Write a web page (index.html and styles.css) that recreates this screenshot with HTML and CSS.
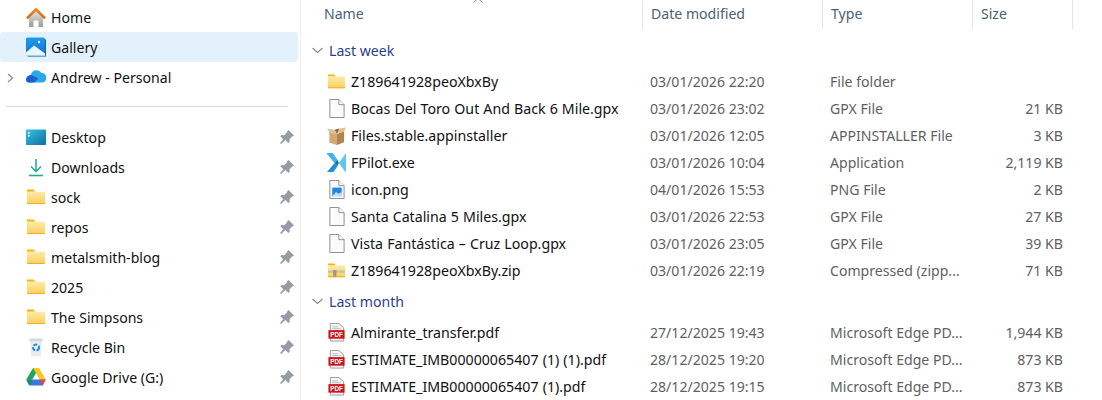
FILE: index.html
```html
<!DOCTYPE html>
<html lang="en">
<head>
    <meta charset="UTF-8">
    <meta name="viewport" content="width=device-width, initial-scale=1.0">
    <title>Explorer</title>
    <link rel="stylesheet" href="styles.css">
</head>
<body>
    <!-- shared icons -->
    <svg class="defs" width="0" height="0">
        <defs>
            <linearGradient id="folderFill" x1="0" y1="0" x2="0" y2="1">
                <stop offset="0" stop-color="#ffeaa6"/>
                <stop offset="1" stop-color="#fbcf5e"/>
            </linearGradient>
            <linearGradient id="desktopFill" x1="0" y1="0" x2="1" y2="1">
                <stop offset="0" stop-color="#35c3e8"/>
                <stop offset="1" stop-color="#0f6f9c"/>
            </linearGradient>
            <linearGradient id="roofFill" x1="0" y1="0" x2="0" y2="1">
                <stop offset="0" stop-color="#f08a24"/>
                <stop offset="1" stop-color="#d9660f"/>
            </linearGradient>
            <linearGradient id="wallFill" x1="0" y1="0" x2="0" y2="1">
                <stop offset="0" stop-color="#e8e8e8"/>
                <stop offset="1" stop-color="#9c9c9c"/>
            </linearGradient>
            <linearGradient id="galleryFill" x1="0" y1="0" x2="0" y2="1">
                <stop offset="0" stop-color="#1c9cf0"/>
                <stop offset="1" stop-color="#1670cc"/>
            </linearGradient>
            <symbol id="folder" viewBox="0 0 20 20">
                <path d="M1 2.500h6.500l2 2.200H1z" fill="#f5b50f"/>
                <path d="M1 4.700h18V16a1 1 0 0 1-1 1H2a1 1 0 0 1-1-1z" fill="url(#folderFill)"/>
                <path d="M1 16h18v.2a.9.9 0 0 1-.9.9H1.900a.9.9 0 0 1-.9-.9z" fill="#eeb023"/>
            </symbol>
            <symbol id="zipfolder" viewBox="0 0 20 20">
                <path d="M1 2.500h6.500l2 2.200H1z" fill="#f5b50f"/>
                <path d="M1 4.700h18V16a1 1 0 0 1-1 1H2a1 1 0 0 1-1-1z" fill="url(#folderFill)"/>
                <rect x="1" y="10" width="18" height="2.400" fill="#c9c2a4"/>
                <rect x="6.500" y="9.500" width="3.400" height="7.500" fill="#9c988a"/>
                <path d="M1 16h18v.2a.9.9 0 0 1-.9.9H1.900a.9.9 0 0 1-.9-.9z" fill="#eeb023"/>
            </symbol>
            <symbol id="page" viewBox="0 0 20 20">
                <path d="M3 .5h9.500L18 6v13.500H3z" fill="#fbfbfb" stroke="#8a8a8a"/>
                <path d="M12.500.5V6H18" fill="#fff" stroke="#8a8a8a"/>
            </symbol>
            <symbol id="image" viewBox="0 0 20 20">
                <path d="M3 .5h9.500L18 6v13.500H3z" fill="#fbfbfb" stroke="#8a8a8a"/>
                <path d="M12.500.5V6H18" fill="#fff" stroke="#8a8a8a"/>
                <rect x="5.500" y="8" width="10" height="9" fill="#1f86e0"/>
                <path d="M5.500 17l4-4.500 2.500 2 3.500-2V17z" fill="#bfe3fb"/>
            </symbol>
            <symbol id="pdf" viewBox="0 0 20 20">
                <path d="M3.500.5h9L17.500 5v14h-14z" fill="#f6f6f6" stroke="#9a9a9a"/>
                <path d="M5.500 4h6M5.500 6h9" stroke="#bbb" fill="none"/>
                <rect x="1.500" y="7.500" width="17" height="9" fill="#c9151b"/>
                <text x="10" y="14.600" class="pdf-text">PDF</text>
            </symbol>
            <symbol id="pin" viewBox="0 0 14 14">
                <path d="M8.600 0l5.400 5.400-.9.9-1 .1-2.600 2.900.2 2.500-1.300 1.300-3-3L1 14l-1-1 3.300-3.700-3-3L1.600 5l2.500.2L7 2.600l.1-1.200z" fill="#949da5"/>
            </symbol>
        </defs>
    </svg>

    <div class="window">
        <nav class="sidebar">
            <a class="nav-item">
                <svg class="nav-icon" viewBox="0 0 20 20">
                    <path d="M3 9.500L10 3l7 6.500V20h-4.500v-6.500h-5V20H3z" fill="url(#wallFill)"/>
                    <path d="M0 10.500L10 .5l10 10-1.800 1.800L10 4.200 1.800 12.300z" fill="url(#roofFill)"/>
                </svg>
                <span class="nav-label">Home</span>
            </a>
            <a class="nav-item active">
                <svg class="nav-icon" viewBox="0 0 20 20">
                    <rect x="0" y="0.500" width="19" height="18.500" rx="1.500" fill="url(#galleryFill)"/>
                    <path d="M19 2v17h1V3.500A1.500 1.500 0 0 0 19 2z" fill="#0e62ad"/>
                    <path d="M0 15.500l8-7 11 8V19H1.500A1.500 1.500 0 0 1 0 17.500z" fill="#eaf6fe"/>
                    <circle cx="13" cy="5" r="1.200" fill="#fff"/>
                    <path d="M1 18.500h19V20H2z" fill="#63a8dc"/>
                </svg>
                <span class="nav-label">Gallery</span>
            </a>
            <a class="nav-item">
                <span class="expander">
                    <svg width="7" height="10" viewBox="0 0 7 10"><path d="M1 1l4.500 4L1 9" fill="none" stroke="#8a8a8a" stroke-width="1.200"/></svg>
                </span>
                <svg class="nav-icon" viewBox="0 0 20 20">
                    <path d="M5 7.500a5.800 5.800 0 0 1 10.500-1.500 4.500 4.500 0 0 1 .5 9.500H3.500a3.200 3.200 0 0 1-.5-6.500z" fill="#29a8ea"/>
                    <path d="M0 12.500c.5-2.500 2.500-4.500 5.500-4.500l7 3.500-4.500 4H3a3 3 0 0 1-3-3z" fill="#1c5fd0"/>
                </svg>
                <span class="nav-label">Andrew - Personal</span>
            </a>
            <div class="nav-divider"></div>
            <a class="nav-item">
                <svg class="nav-icon" viewBox="0 0 20 20">
                    <rect x="0" y="2.500" width="20" height="15.500" rx=".8" fill="url(#desktopFill)"/>
                    <rect x="2" y="5" width="1.600" height="1.600" fill="#fff"/>
                    <rect x="2" y="8" width="1.600" height="1.600" fill="#fff"/>
                </svg>
                <span class="nav-label">Desktop</span>
                <svg class="pin"><use href="#pin"/></svg>
            </a>
            <a class="nav-item">
                <svg class="nav-icon" viewBox="0 0 20 20">
                    <path d="M10 2v12M5 9.500l5 5 5-5" fill="none" stroke="#20ab8f" stroke-width="1.500"/>
                    <path d="M3 18.500h14" stroke="#20ab8f" stroke-width="1.600"/>
                </svg>
                <span class="nav-label">Downloads</span>
                <svg class="pin"><use href="#pin"/></svg>
            </a>
            <a class="nav-item">
                <svg class="nav-icon"><use href="#folder"/></svg>
                <span class="nav-label">sock</span>
                <svg class="pin"><use href="#pin"/></svg>
            </a>
            <a class="nav-item">
                <svg class="nav-icon"><use href="#folder"/></svg>
                <span class="nav-label">repos</span>
                <svg class="pin"><use href="#pin"/></svg>
            </a>
            <a class="nav-item">
                <svg class="nav-icon"><use href="#folder"/></svg>
                <span class="nav-label">metalsmith-blog</span>
                <svg class="pin"><use href="#pin"/></svg>
            </a>
            <a class="nav-item">
                <svg class="nav-icon"><use href="#folder"/></svg>
                <span class="nav-label">2025</span>
                <svg class="pin"><use href="#pin"/></svg>
            </a>
            <a class="nav-item">
                <svg class="nav-icon"><use href="#folder"/></svg>
                <span class="nav-label">The Simpsons</span>
                <svg class="pin"><use href="#pin"/></svg>
            </a>
            <a class="nav-item">
                <svg class="nav-icon" viewBox="0 0 20 20">
                    <path d="M4 4h12l-1.200 14.500a1 1 0 0 1-1 .9H6.200a1 1 0 0 1-1-.9z" fill="#e9edf0"/>
                    <path d="M3.500 1.500h13V4h-13z" fill="#d3d7da"/>
                    <circle cx="10" cy="10.500" r="3" fill="none" stroke="#1f8fdc" stroke-width="2" stroke-dasharray="4 1.500"/>
                </svg>
                <span class="nav-label">Recycle Bin</span>
                <svg class="pin"><use href="#pin"/></svg>
            </a>
            <a class="nav-item">
                <svg class="nav-icon" viewBox="0 0 20 20">
                    <path d="M7 1h6L6.300 12.500H.3z" fill="#1fa463"/>
                    <path d="M7 1h6l6.700 11.500h-6z" fill="#ffc51f"/>
                    <path d="M.3 12.500h19.400l-3 6H3.300z" fill="#3777e3"/>
                    <path d="M6.300 12.500L3.300 18.500.3 12.500z" fill="#1a8a55"/>
                    <path d="M13.700 12.500h6L16.700 18.500l-1-.5z" fill="#e8453c"/>
                </svg>
                <span class="nav-label">Google Drive (G:)</span>
                <svg class="pin"><use href="#pin"/></svg>
            </a>
        </nav>

        <main class="files">
            <svg class="sort-caret" width="10" height="5" viewBox="0 0 10 5"><path d="M.5 4.500L5 .5l4.500 4" fill="none" stroke="#8a8a8a"/></svg>
            <div class="col-header">
                <div class="col col-name">Name</div>
                <div class="col">Date modified</div>
                <div class="col">Type</div>
                <div class="col">Size</div>
            </div>

            <div class="group-title">
                <svg width="11" height="7" viewBox="0 0 11 7"><path d="M.5 1l5 4.500 5-4.500" fill="none" stroke="#8a8a8a" stroke-width="1.100"/></svg>
                <span>Last week</span>
            </div>
            <div class="file-row">
                <div class="file-name"><svg class="file-icon"><use href="#folder"/></svg>Z189641928peoXbxBy</div>
                <div class="file-meta">03/01/2026 22:20</div>
                <div class="file-meta">File folder</div>
                <div class="file-meta file-size"></div>
            </div>
            <div class="file-row">
                <div class="file-name"><svg class="file-icon"><use href="#page"/></svg>Bocas Del Toro Out And Back 6 Mile.gpx</div>
                <div class="file-meta">03/01/2026 23:02</div>
                <div class="file-meta">GPX File</div>
                <div class="file-meta file-size">21 KB</div>
            </div>
            <div class="file-row">
                <div class="file-name">
                    <svg class="file-icon" viewBox="0 0 20 20">
                        <path d="M2.500 6l8 2.500V20l-8-2.500z" fill="#d3aa75"/>
                        <path d="M10.500 8.500l7.500-3V17l-7.500 3z" fill="#b08550"/>
                        <path d="M2.500 6L0 2.500l8 1.500 2.500 4.500zM18 5.500L20 1.500l-7 1-2.500 6z" fill="#e3c090"/>
                        <path d="M8 4l5-1.500-2.500 6z" fill="#8d6638"/>
                    </svg>Files.stable.appinstaller
                </div>
                <div class="file-meta">03/01/2026 12:05</div>
                <div class="file-meta">APPINSTALLER File</div>
                <div class="file-meta file-size">3 KB</div>
            </div>
            <div class="file-row">
                <div class="file-name">
                    <svg class="file-icon" viewBox="0 0 20 20">
                        <path d="M0 0h6l5 7-3 3.500L0 1z" fill="#3fb3ec"/>
                        <path d="M0 21h6l5-7-3-3.500L0 20z" fill="#1e90d8"/>
                        <path d="M20 0L12.500 10.500 20 21z" fill="#5cc8f2"/>
                        <path d="M8 10.500L11 7l1.500 3.500L11 14z" fill="#1273bb"/>
                    </svg>FPilot.exe
                </div>
                <div class="file-meta">03/01/2026 10:04</div>
                <div class="file-meta">Application</div>
                <div class="file-meta file-size">2,119 KB</div>
            </div>
            <div class="file-row">
                <div class="file-name"><svg class="file-icon"><use href="#image"/></svg>icon.png</div>
                <div class="file-meta">04/01/2026 15:53</div>
                <div class="file-meta">PNG File</div>
                <div class="file-meta file-size">2 KB</div>
            </div>
            <div class="file-row">
                <div class="file-name"><svg class="file-icon"><use href="#page"/></svg>Santa Catalina 5 Miles.gpx</div>
                <div class="file-meta">03/01/2026 22:53</div>
                <div class="file-meta">GPX File</div>
                <div class="file-meta file-size">27 KB</div>
            </div>
            <div class="file-row">
                <div class="file-name"><svg class="file-icon"><use href="#page"/></svg>Vista Fantástica – Cruz Loop.gpx</div>
                <div class="file-meta">03/01/2026 23:05</div>
                <div class="file-meta">GPX File</div>
                <div class="file-meta file-size">39 KB</div>
            </div>
            <div class="file-row">
                <div class="file-name"><svg class="file-icon"><use href="#zipfolder"/></svg>Z189641928peoXbxBy.zip</div>
                <div class="file-meta">03/01/2026 22:19</div>
                <div class="file-meta">Compressed (zipp...</div>
                <div class="file-meta file-size">71 KB</div>
            </div>

            <div class="group-title">
                <svg width="11" height="7" viewBox="0 0 11 7"><path d="M.5 1l5 4.500 5-4.500" fill="none" stroke="#8a8a8a" stroke-width="1.100"/></svg>
                <span>Last month</span>
            </div>
            <div class="file-row">
                <div class="file-name"><svg class="file-icon"><use href="#pdf"/></svg>Almirante_transfer.pdf</div>
                <div class="file-meta">27/12/2025 19:43</div>
                <div class="file-meta">Microsoft Edge PD...</div>
                <div class="file-meta file-size">1,944 KB</div>
            </div>
            <div class="file-row">
                <div class="file-name"><svg class="file-icon"><use href="#pdf"/></svg>ESTIMATE_IMB00000065407 (1) (1).pdf</div>
                <div class="file-meta">28/12/2025 19:20</div>
                <div class="file-meta">Microsoft Edge PD...</div>
                <div class="file-meta file-size">873 KB</div>
            </div>
            <div class="file-row">
                <div class="file-name"><svg class="file-icon"><use href="#pdf"/></svg>ESTIMATE_IMB00000065407 (1).pdf</div>
                <div class="file-meta">28/12/2025 19:15</div>
                <div class="file-meta">Microsoft Edge PD...</div>
                <div class="file-meta file-size">873 KB</div>
            </div>
        </main>
    </div>
</body>
</html>
```

FILE: styles.css
```css
html, body {
    margin: 0;
    padding: 0;
    height: 400px;
    overflow: hidden;
    background-color: #fff;
}

body {
    font-family: "Noto Sans", "Open Sans", sans-serif;
    font-size: 14.1px;
    color: #111;
}

.defs {
    display: block;
    height: 0;
}

.window {
    display: flex;
    height: 400px;
}

/* left navigation pane */
.sidebar {
    width: 301px;
    flex: none;
    padding-top: 2px;
    box-sizing: border-box;
    border-right: 1px solid #efefef;
}

.nav-item {
    display: flex;
    align-items: center;
    height: 30px;
    width: 298px;
    padding-left: 26px;
    padding-right: 4px;
    box-sizing: border-box;
    border-radius: 4px;
    position: relative;
}

.nav-item.active {
    background-color: #e3f1fc;
}

.nav-icon {
    width: 20px;
    height: 20px;
    flex: none;
    margin-right: 5px;
}

.nav-label {
    flex: 1;
    white-space: nowrap;
}

.expander {
    position: absolute;
    left: 7px;
    top: 11px;
    display: flex;
}

.pin {
    width: 14px;
    height: 14px;
    flex: none;
}

.nav-divider {
    height: 1px;
    width: 282px;
    margin: 14px 0 15px 6px;
    background-color: #d9d9d9;
}

/* file list */
.files {
    flex: 1;
    position: relative;
}

.sort-caret {
    position: absolute;
    left: 172px;
    top: -2px;
}

.col-header,
.file-row {
    display: grid;
    grid-template-columns: 341px 180px 150px 100px;
}

.col-header {
    grid-template-columns: 342px 180px 150px 100px;
    height: 29px;
    margin-bottom: 8px;
    color: #4c5f75;
}

.col {
    padding-left: 8px;
    line-height: 27px;
    border-right: 1px solid #e5e5e5;
    box-sizing: border-box;
}

.col-name {
    padding-left: 23px;
}

.group-title {
    display: flex;
    align-items: center;
    height: 27px;
    margin-bottom: 4px;
    padding-left: 11px;
    color: #2a3f8f;
}

.group-title span {
    margin-left: 6px;
}

.file-row {
    height: 27px;
    align-items: center;
}

.file-row + .group-title {
    margin-top: 4px;
}

.file-name {
    display: flex;
    align-items: center;
    padding-left: 26px;
    font-size: 14.2px;
    word-spacing: .4px;
    white-space: nowrap;
}

.file-icon {
    width: 19px;
    height: 19px;
    flex: none;
    margin-right: 5px;
}

.file-meta {
    padding-left: 8px;
    color: #5f5f5f;
    white-space: nowrap;
}

.file-size {
    padding-left: 0;
    padding-right: 9px;
    text-align: right;
}

.pdf-text {
    font-family: "Liberation Sans", sans-serif;
    font-size: 6.6px;
    font-weight: bold;
    text-anchor: middle;
    fill: #fff;
}
```
